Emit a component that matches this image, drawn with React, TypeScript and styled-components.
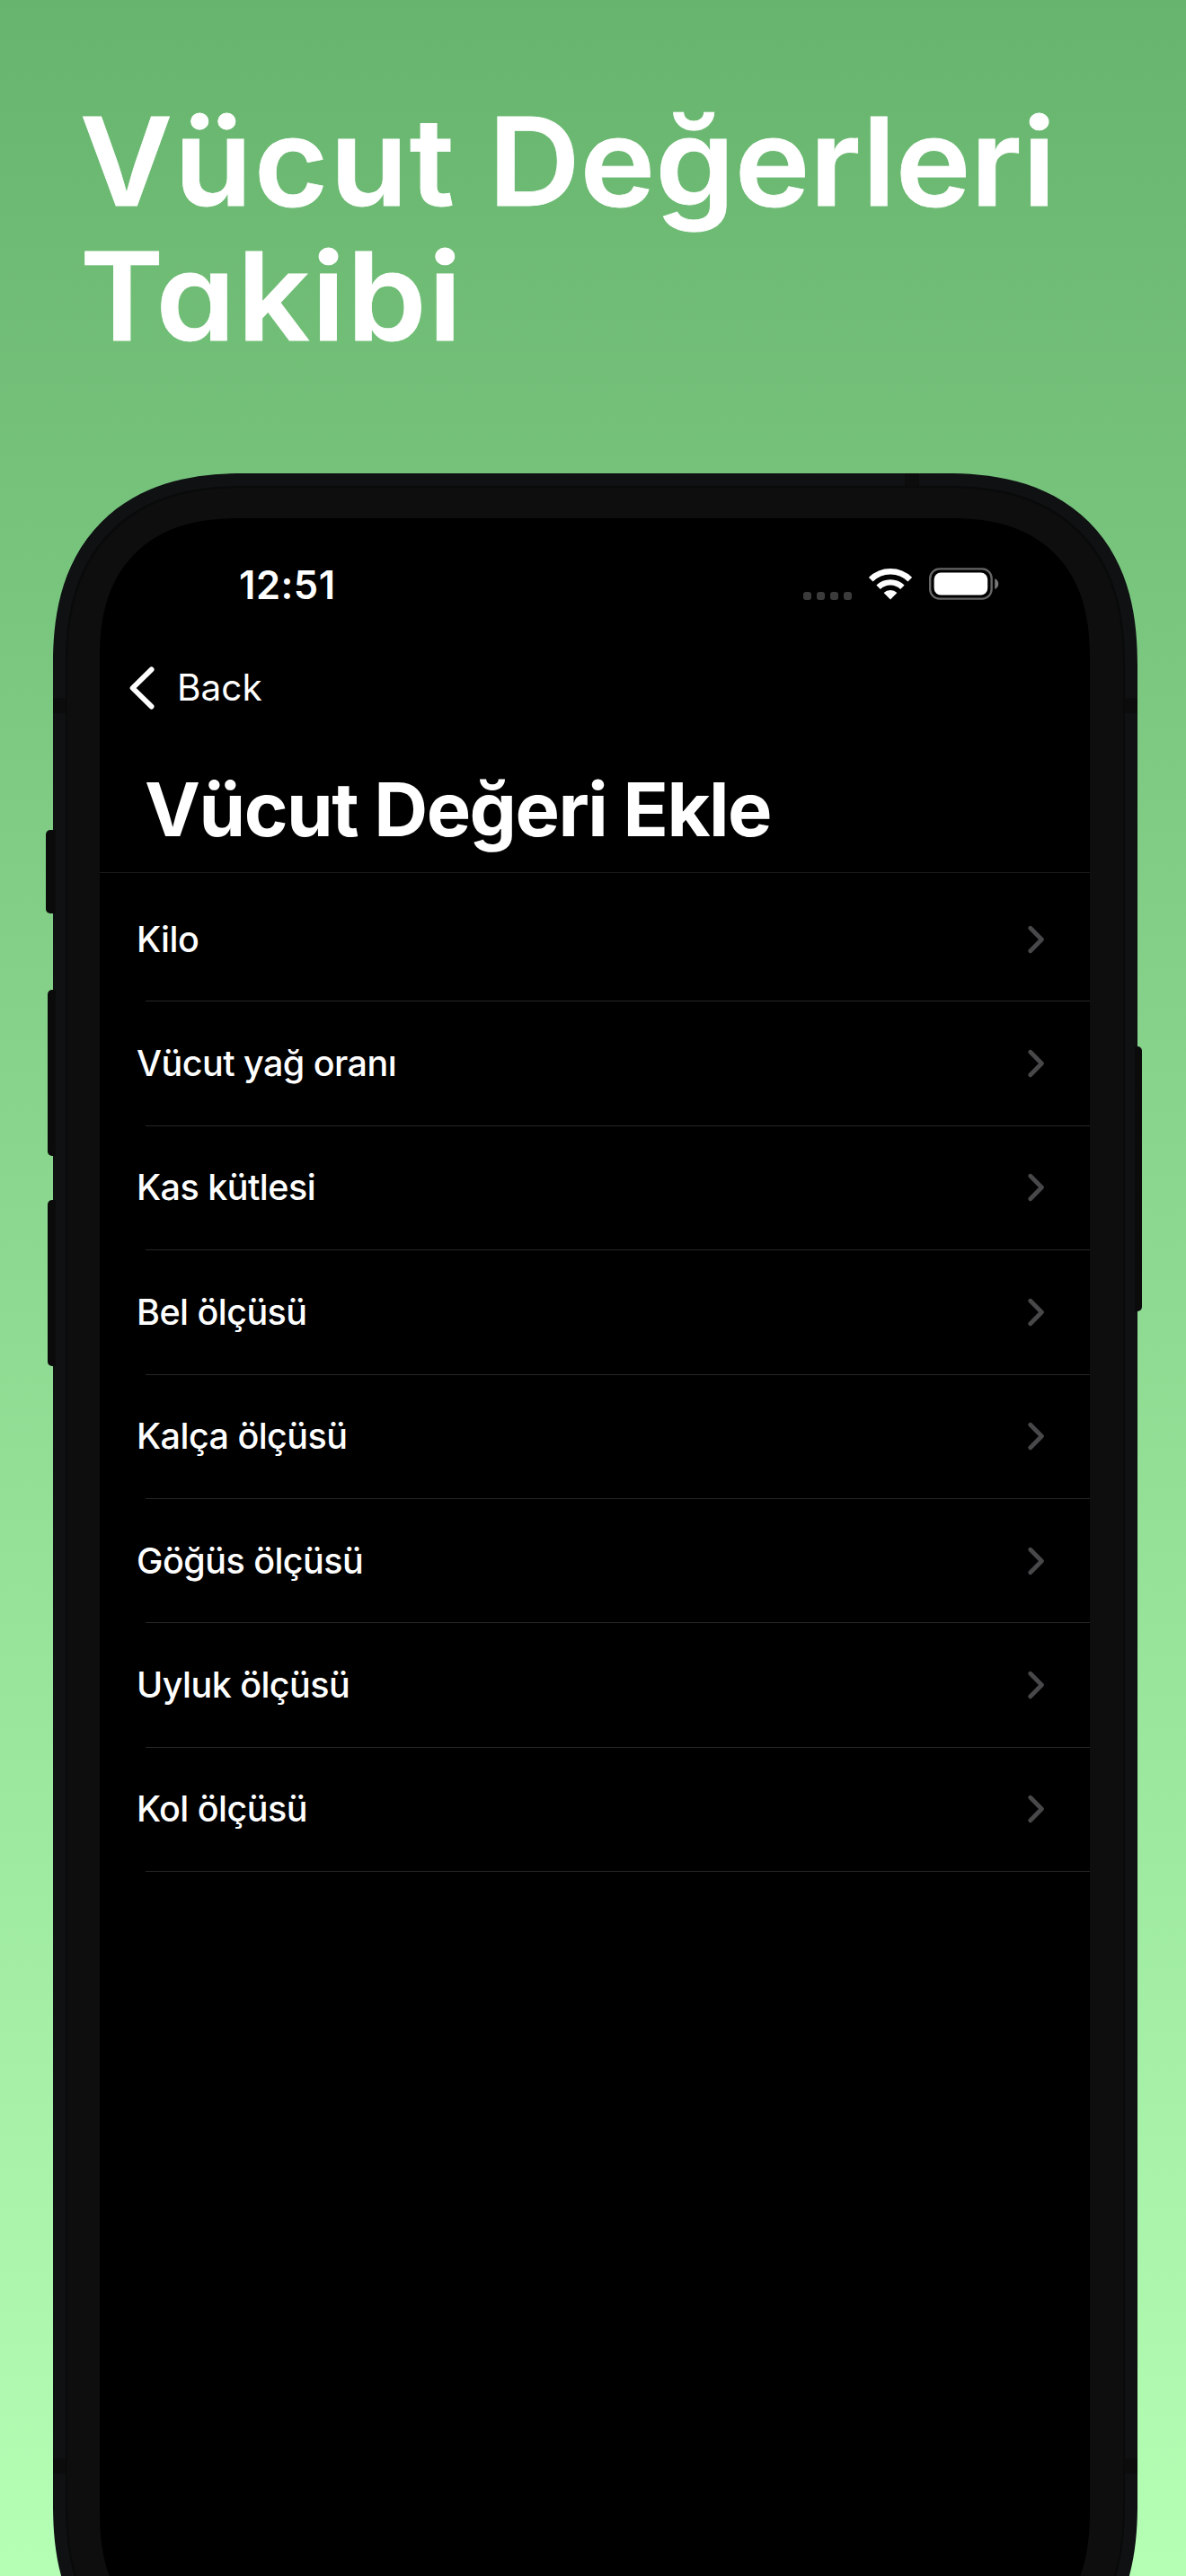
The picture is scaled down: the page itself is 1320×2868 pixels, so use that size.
import styled, { createGlobalStyle, css } from 'styled-components';

const GlobalStyle = createGlobalStyle`
  * {
    box-sizing: border-box;
  }

  body {
    margin: 0;
    font-family: Inter, 'Liberation Sans', sans-serif;
    color: #fff;
  }
`;

// continuous corner where the browser has it, plain arc otherwise
const smoothCorner = (arc: number, smooth: number) => css`
  border-radius: ${arc}px;

  @supports (corner-shape: superellipse(1.25)) {
    border-radius: ${smooth}px;
    corner-shape: superellipse(1.25);
  }
`;

const Page = styled.main`
  display: flex;
  flex-direction: column;
  width: 1320px;
  height: 2868px;
  overflow: hidden;
  background: linear-gradient(180deg, #67b46e 0%, #b4ffb4 100%);
`;

const Headline = styled.h1`
  margin: 105px 0 122px 89px;
  font-size: 136px;
  line-height: 150px;
  font-weight: 600;
  white-space: nowrap;
  font-feature-settings: 'cv11' 1;
  -webkit-text-stroke: 0.8px #fff;
`;

const HeadlineLine = styled.span`
  display: block;
  transform: scaleX(1.04);
  transform-origin: left;
`;

const Word = styled.span<{ $spacing: number }>`
  letter-spacing: ${(props) => props.$spacing}px;
`;

const Phone = styled.div`
  position: relative;
  flex: none;
  width: 1207px;
  height: 2475px;
  margin-left: 59px;
  padding: 16px;
  background: #0f1113;
  ${smoothCorner(187, 214)}
`;

const Bezel = styled.div`
  position: relative;
  height: 100%;
  padding: 34px 37px 34px 36px;
  background: #0e0e0e;
  box-shadow: 0 0 0 2px #090a0a;
  ${smoothCorner(172, 198)}
`;

const SideButton = styled.i<{ $side: 'left' | 'right'; $top: number; $height: number; $depth: number }>`
  position: absolute;
  top: ${(props) => props.$top}px;
  ${(props) => props.$side}: -${(props) => props.$depth}px;
  width: ${(props) => props.$depth + 3}px;
  height: ${(props) => props.$height}px;
  border-radius: ${(props) => (props.$side === 'left' ? '5px 0 0 5px' : '0 5px 5px 0')};
  background: #0b0b0b;
`;

const AntennaBand = styled.i<{ $side: 'left' | 'right'; $top: number }>`
  position: absolute;
  top: ${(props) => props.$top}px;
  ${(props) => props.$side}: 0;
  width: 15px;
  height: 17px;
  background: #0c0c0c;
`;

const TopBand = styled.i`
  position: absolute;
  top: 0;
  left: 948px;
  width: 16px;
  height: 15px;
  background: #0c0c0c;
`;

const Screen = styled.section`
  display: flex;
  flex-direction: column;
  height: 100%;
  overflow: hidden;
  background: #000;
  ${smoothCorner(140, 155)}
`;

const StatusBar = styled.div`
  display: flex;
  align-items: center;
  justify-content: space-between;
  height: 148px;
  padding: 0 101px 0 155px;
`;

const Clock = styled.span`
  font-size: 43.5px;
  font-weight: 600;
  letter-spacing: 0.5px;
`;

const StatusIcons = styled.div`
  display: flex;
  align-items: center;
  margin-bottom: 3px;
`;

const SignalDots = styled.div`
  display: flex;
  gap: 6px;
  align-self: flex-end;
  margin-right: 19px;
`;

const Dot = styled.i`
  width: 9px;
  height: 9px;
  border-radius: 3px;
  background: #3b3b3b;
`;

const WifiIcon = styled.svg`
  width: 48px;
  height: 36px;
  margin-right: 19px;
`;

const BatteryIcon = styled.svg`
  width: 78px;
  height: 36px;
`;

const BackLink = styled.div`
  display: flex;
  align-items: center;
  height: 81px;
  padding-left: 32px;
  font-size: 40.5px;
  font-weight: 400;
`;

const BackIcon = styled.svg`
  width: 30px;
  height: 48px;
  margin-right: 24px;
`;

const ScreenTitle = styled.h2`
  height: 166px;
  margin: 0;
  padding: 25px 0 0 50px;
  border-bottom: 1px solid #1b1b1b;
  font-size: 83px;
  line-height: 140px;
  font-weight: 700;
  letter-spacing: -1.5px;
  white-space: nowrap;
`;

const List = styled.ul`
  margin: 0;
  padding: 5px 0 0;
  list-style: none;
`;

const Item = styled.li`
  display: flex;
  align-items: center;
  justify-content: space-between;
  height: 137.4px;
  padding: 0 50px 0 41px;
  font-size: 39.5px;
  font-weight: 500;
  letter-spacing: -0.55px;
`;

const Divider = styled.li`
  height: 1px;
  margin-left: 51px;
  background: #262626;
`;

const ChevronIcon = styled.svg`
  width: 19px;
  height: 32px;
`;

const measurements = [
  'Kilo',
  'Vücut yağ oranı',
  'Kas kütlesi',
  'Bel ölçüsü',
  'Kalça ölçüsü',
  'Göğüs ölçüsü',
  'Uyluk ölçüsü',
  'Kol ölçüsü',
];

const Wifi = () => (
  <WifiIcon viewBox="0 0 48 36" fill="none" stroke="#fff">
    <path d="M2.2 13.2a31 31 0 0 1 43.6 0" strokeWidth="6.6" />
    <path d="M10.6 21.8a19.2 19.2 0 0 1 26.8 0" strokeWidth="6.4" />
    <path d="M24 35.6l-7.4-7.6a10.8 10.8 0 0 1 14.8 0z" fill="#fff" stroke="none" />
  </WifiIcon>
);

const Battery = () => (
  <BatteryIcon viewBox="0 0 78 36">
    <rect x="1.2" y="1.4" width="68.4" height="33.2" rx="10.5" fill="none" stroke="#666" strokeWidth="2.4" />
    <rect x="5.6" y="5.6" width="59.6" height="24.8" rx="7.5" fill="#fff" />
    <path d="M73.2 12.2c5.4 2 5.4 9.8 0 11.8z" fill="#777" />
  </BatteryIcon>
);

const Chevron = () => (
  <ChevronIcon viewBox="0 0 19 32" fill="none" stroke="#48484a" strokeWidth="4.8" strokeLinecap="round" strokeLinejoin="round">
    <path d="M2.8 3.2l12.6 12.8l-12.6 12.8" />
  </ChevronIcon>
);

const App = () => {
  return (
    <>
      <GlobalStyle />
      <Page>
        <Headline>
          <HeadlineLine>
            <Word $spacing={2}>Vücut</Word> <Word $spacing={0}>Değerleri</Word>
          </HeadlineLine>
          <HeadlineLine>
            <Word $spacing={2.2}>Takibi</Word>
          </HeadlineLine>
        </Headline>

        <Phone>
          <SideButton $side="left" $top={397} $height={93} $depth={8} />
          <SideButton $side="left" $top={575} $height={185} $depth={6} />
          <SideButton $side="left" $top={809} $height={185} $depth={6} />
          <SideButton $side="right" $top={638} $height={295} $depth={5} />
          <TopBand />
          <AntennaBand $side="left" $top={250} />
          <AntennaBand $side="right" $top={250} />
          <AntennaBand $side="left" $top={2210} />
          <AntennaBand $side="right" $top={2210} />
          <Bezel>
            <Screen>
              <StatusBar>
                <Clock>12:51</Clock>
                <StatusIcons>
                  <SignalDots>
                    <Dot />
                    <Dot />
                    <Dot />
                    <Dot />
                  </SignalDots>
                  <Wifi />
                  <Battery />
                </StatusIcons>
              </StatusBar>
              <BackLink>
                <BackIcon viewBox="0 0 30 48" fill="none" stroke="#fff" strokeWidth="5.8" strokeLinecap="round" strokeLinejoin="round">
                  <path d="M25.6 3.4l-21 20.6l21 20.6" />
                </BackIcon>
                Back
              </BackLink>
              <ScreenTitle>Vücut Değeri Ekle</ScreenTitle>
              <List>
                {measurements.map((name) => [
                  <Item key={name}>
                    {name}
                    <Chevron />
                  </Item>,
                  <Divider key={`${name}-divider`} />,
                ])}
              </List>
            </Screen>
          </Bezel>
        </Phone>
      </Page>
    </>
  );
};

export default App;
